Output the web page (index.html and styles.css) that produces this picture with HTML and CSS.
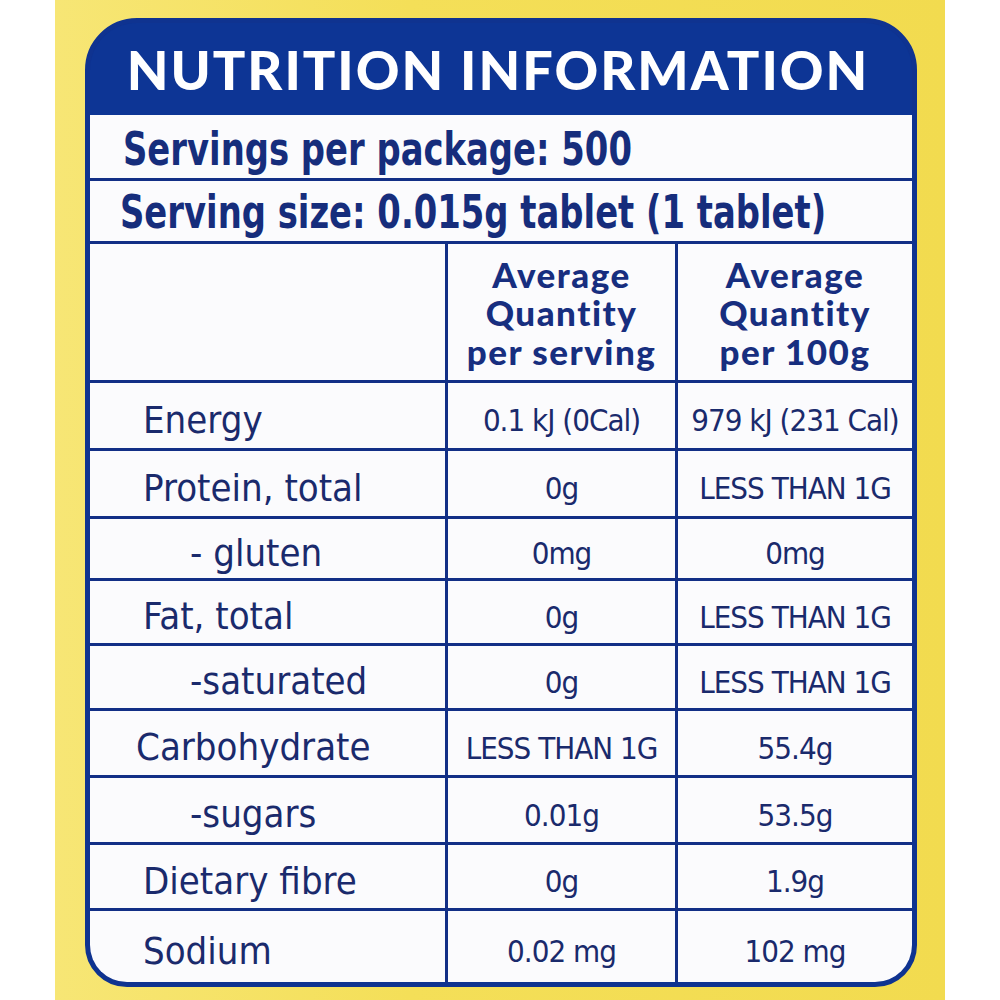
FILE: index.html
```html
<!DOCTYPE html>
<html>
<head>
<meta charset="utf-8">
<link rel="stylesheet" href="styles.css">
</head>
<body>
<div class="backdrop">
  <div class="panel">
    <div class="title">NUTRITION INFORMATION</div>
    <div class="grid">
      <div class="cell span serv1"><span class="squeeze">Servings per package: 500</span></div>
      <div class="cell span serv2"><span class="squeeze">Serving size: 0.015g tablet (1 tablet)</span></div>
      <div class="cell colhead"></div>
      <div class="cell colhead">Average<br>Quantity<br>per serving</div>
      <div class="cell colhead">Average<br>Quantity<br>per 100g</div>

      <div class="cell label">Energy</div>
      <div class="cell val">0.1 kJ (0Cal)</div>
      <div class="cell val">979 kJ (231 Cal)</div>

      <div class="cell label">Protein, total</div>
      <div class="cell val">0g</div>
      <div class="cell val">LESS THAN 1G</div>

      <div class="cell label sub">- gluten</div>
      <div class="cell val">0mg</div>
      <div class="cell val">0mg</div>

      <div class="cell label">Fat, total</div>
      <div class="cell val">0g</div>
      <div class="cell val">LESS THAN 1G</div>

      <div class="cell label sub">-saturated</div>
      <div class="cell val">0g</div>
      <div class="cell val">LESS THAN 1G</div>

      <div class="cell label carb">Carbohydrate</div>
      <div class="cell val">LESS THAN 1G</div>
      <div class="cell val">55.4g</div>

      <div class="cell label sub">-sugars</div>
      <div class="cell val">0.01g</div>
      <div class="cell val">53.5g</div>

      <div class="cell label">Dietary fibre</div>
      <div class="cell val">0g</div>
      <div class="cell val">1.9g</div>

      <div class="cell label">Sodium</div>
      <div class="cell val">0.02 mg</div>
      <div class="cell val">102 mg</div>
    </div>
  </div>
</div>
</body>
</html>
```

FILE: styles.css
```css
html, body {
  margin: 0;
  padding: 0;
  background: #ffffff;
}

.backdrop {
  margin-left: 55px;
  width: 890px;
  height: 1000px;
  background: linear-gradient(90deg, #f7e675 0%, #f4df58 40%, #f2db4f 100%);
  padding: 18px 0 0 30px;
  box-sizing: border-box;
}

.panel {
  width: 832px;
  box-sizing: border-box;
  border: 5px solid #0f3390;
  border-radius: 52px 52px 42px 42px;
  background: #0f3390;
  overflow: hidden;
}

.title {
  height: 92px;
  background: #0d3595;
  color: #ffffff;
  font-family: "Lato", "DejaVu Sans", sans-serif;
  font-weight: 900;
  font-size: 54px;
  letter-spacing: 2px;
  text-align: center;
  line-height: 94px;
  padding-right: 6px;
}

.grid {
  display: grid;
  grid-template-columns: 355px 227px 234px;
  grid-template-rows: 63px 60px 136px 65px 65px 59px 62px 62px 64px 64px 63px 71px;
  gap: 3px;
  background: #122f86;
}

.cell {
  background: #fbfbfd;
  color: #1a2a6c;
  display: flex;
  align-items: center;
}

.span {
  grid-column: 1 / 4;
  font-family: "DejaVu Sans Condensed", "DejaVu Sans", sans-serif;
  font-weight: 700;
  font-size: 47px;
  color: #162d7c;
  padding-left: 33px;
  padding-top: 3px;
  white-space: nowrap;
  overflow: hidden;
}

.squeeze {
  display: inline-block;
  transform: scaleX(0.8);
  transform-origin: left center;
}

.serv2 {
  padding-left: 30px;
  padding-top: 1px;
}

.colhead {
  justify-content: center;
  text-align: center;
  font-family: "Lato", "DejaVu Sans", sans-serif;
  font-weight: 900;
  font-size: 35px;
  line-height: 38.5px;
  letter-spacing: 1.5px;
  color: #172e7f;
  padding-top: 1px;
}

.label {
  font-family: "DejaVu Sans Condensed", "DejaVu Sans", sans-serif;
  font-size: 38px;
  padding-left: 53px;
  padding-top: 8px;
}

.sub {
  padding-left: 100px;
}

.carb {
  padding-left: 46px;
}

.val {
  justify-content: center;
  font-family: "DejaVu Sans Condensed", "DejaVu Sans", sans-serif;
  font-size: 31px;
  letter-spacing: -1px;
  padding-top: 9px;
}
```
